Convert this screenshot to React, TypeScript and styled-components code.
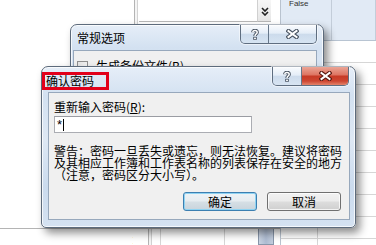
import styled, { createGlobalStyle } from "styled-components";

const GlobalStyle = createGlobalStyle`
  html, body {
    margin: 0;
    padding: 0;
    background: #fff;
    overflow: hidden;
  }
  body {
    font-family: "Noto Sans CJK SC", "Noto Sans", sans-serif;
    font-size: 12px;
    color: #000;
  }
`;

const Desktop = styled.div`
  position: relative;
  width: 376px;
  height: 245px;
  overflow: hidden;
  background: #fff;
`;

/* ---------- the spreadsheet window behind the dialogs ---------- */

const AppBack = styled.div`
  display: flex;
  width: 100%;
  height: 100%;
`;

const LeftColumn = styled.div`
  width: 281px;
  display: flex;
  flex-direction: column;
`;

const RightColumn = styled.div`
  flex: 1;
  display: flex;
  flex-direction: column;
  border-left: 1px solid #b9c3cf;
`;

const TopRow = styled.div`
  height: 24px;
  display: flex;
`;

const Blank = styled.div<{ $w: number }>`
  width: ${(p) => p.$w}px;
  background: #fff;
`;

const DoubleLine = styled.div`
  width: 2px;
  border-left: 1px solid #b4b4b4;
  border-right: 1px solid #d2d2d2;
  margin: 0 1px;
  background: #f4f4f4;
`;

const Combo = styled.div`
  flex: 1;
  border-bottom: 1px solid #b7b7b7;
  margin-bottom: 2px;
  background: #fff;
`;

const DropButton = styled.div`
  width: 14px;
  margin-bottom: 2px;
  border-left: 1px solid #d0d0d0;
  border-bottom: 1px solid #b7b7b7;
  background: linear-gradient(#f7f7f7, #e6e6e6);
  display: flex;
  align-items: flex-end;
  justify-content: center;
  padding-bottom: 5px;
  box-sizing: border-box;
`;

const Body = styled.div`
  flex: 1;
  background: #fff;
`;

const BottomRow = styled.div`
  height: 16px;
  display: flex;
  border-top: 1px solid #b4b4b4;
`;

const BottomLeft = styled.div`
  width: 133px;
  display: flex;
  justify-content: flex-end;
  align-items: flex-end;
`;

const Beam = styled.span`
  font-family: "Liberation Serif", serif;
  font-weight: bold;
  font-size: 11px;
  line-height: 9px;
  margin-right: -4px;
`;

const SheetStrip = styled.div`
  flex: 1;
  display: flex;
  background-color: #fff;
  background-image: linear-gradient(to right, #d6d6d6 1px, transparent 1px);
  background-size: 64px 100%;
  background-position: 71px 0;
  padding-left: 105px;
`;

const Thumb = styled.div`
  width: 14px;
  border: 1px solid #8896aa;
  border-top: none;
  background: linear-gradient(to right, #c9d3e2, #aebcd2 50%, #c3cede);
`;

const PropPanel = styled.div`
  height: 40px;
  display: flex;
  background: #e1eaf5;
  border-bottom: 1px solid #b8c4d2;
`;

const PropCell = styled.div<{ $w: number }>`
  width: ${(p) => p.$w}px;
  border-right: 1px solid #c3cdd9;
  overflow: hidden;
  font-family: "Liberation Sans", sans-serif;
  font-size: 8px;
  color: #333;
  line-height: 8px;
  padding-left: 8px;
  box-sizing: border-box;
`;

const Sheet = styled.div`
  flex: 1;
  background-color: #fff;
  background-image: linear-gradient(#d6d6d6 1px, transparent 1px),
    linear-gradient(to right, #d6d6d6 1px, transparent 1px);
  background-size: 100% 22px, 64px 100%;
  background-position: 0 21px, 36px 0;
`;

/* ---------- Aero dialogs ---------- */

const Dialog = styled.div<{ $x: number; $y: number; $w: number; $h: number }>`
  position: absolute;
  left: ${(p) => p.$x}px;
  top: ${(p) => p.$y}px;
  width: ${(p) => p.$w}px;
  height: ${(p) => p.$h}px;
  box-sizing: border-box;
  display: flex;
  flex-direction: column;
  border: 1px solid #5d6b7c;
  border-radius: 7px 7px 5px 5px;
  background: linear-gradient(
    to bottom,
    #e6eef8 0%,
    #d3e1f1 18%,
    #dee8f4 45%,
    #cbdbee 75%,
    #d5e2f1 100%
  );
  box-shadow: inset 0 0 0 1px rgba(255, 255, 255, 0.75),
    4px 5px 9px rgba(0, 0, 0, 0.45);
`;

const TitleBar = styled.div<{ $left: number; $right: number }>`
  height: 25px;
  display: flex;
  justify-content: space-between;
  align-items: flex-start;
  padding: 0 ${(p) => p.$right}px 0 ${(p) => p.$left}px;
`;

const Title = styled.div`
  line-height: 25px;
  font-size: 12px;
  color: #000;
`;

const MarkedTitle = styled.div`
  margin-top: 5px;
  height: 18px;
  box-sizing: border-box;
  border: 3px solid #e2001a;
  padding: 0 12px 0 1px;
  line-height: 12px;
  font-size: 12px;
`;

const CaptionGroup = styled.div`
  display: flex;
  height: 18px;
  border: 1px solid #5f6e80;
  border-top: none;
  border-radius: 0 0 5px 5px;
  overflow: hidden;
  box-shadow: 0 0 0 1px rgba(255, 255, 255, 0.5);
`;

const CaptionButton = styled.div<{ $w: number; $red?: boolean }>`
  width: ${(p) => p.$w}px;
  display: flex;
  align-items: center;
  justify-content: center;
  & + & {
    border-left: 1px solid #66778a;
  }
  background: ${(p) =>
    p.$red
      ? "linear-gradient(#eba595 0%, #de7664 42%, #c73a26 52%, #cd4631 78%, #e3836a 100%)"
      : "linear-gradient(rgba(255,255,255,0.75) 0%, rgba(232,240,249,0.6) 45%, rgba(190,208,228,0.55) 52%, rgba(214,228,242,0.6) 100%)"};
`;

const Client = styled.div<{ $m: string }>`
  flex: 1;
  margin: ${(p) => p.$m};
  background: #f0f0f0;
  border: 1px solid #97a8bc;
  display: flex;
  flex-direction: column;
`;

const CheckRow = styled.div`
  display: flex;
  align-items: center;
  gap: 8px;
  padding: 9px 0 0 3px;
  font-size: 12px;
  line-height: 12px;
`;

const CheckBox = styled.div`
  width: 11px;
  height: 11px;
  box-sizing: border-box;
  border: 1px solid #8f8f8f;
  background: linear-gradient(135deg, #e4e4e4, #fbfbfb);
`;

const ClientBody = styled.div`
  flex: 1;
  display: flex;
  flex-direction: column;
  padding: 8px 8px 7px 5px;
`;

const Label = styled.div`
  line-height: 12px;
  font-size: 12px;
  u {
    text-decoration: underline;
  }
`;

const PasswordField = styled.div`
  margin-top: 3px;
  width: 198px;
  height: 17px;
  box-sizing: border-box;
  border: 1px solid #abadb3;
  border-top-color: #9a9ca3;
  background: #fff;
  display: flex;
  align-items: center;
  padding-left: 2px;
  font-family: "Liberation Sans", sans-serif;
  font-size: 13px;
  line-height: 13px;
`;

const Caret = styled.span`
  width: 1px;
  height: 12px;
  background: #000;
  margin-left: 1px;
`;

const Warning = styled.p`
  margin: 12px 0 0;
  line-height: 12px;
  font-size: 12px;
  white-space: nowrap;
`;

const ButtonRow = styled.div`
  margin-top: 11px;
  display: flex;
  justify-content: flex-end;
  gap: 10px;
`;

const PushButton = styled.div<{ $default?: boolean }>`
  width: 74px;
  height: 19px;
  box-sizing: border-box;
  border: 1px solid ${(p) => (p.$default ? "#3c7fb1" : "#707070")};
  border-radius: 3px;
  background: ${(p) =>
    p.$default
      ? "linear-gradient(#eef3f6 0%, #e6ecf0 48%, #d6dfe5 52%, #c9d4dc 100%)"
      : "linear-gradient(#f2f2f2 0%, #ebebeb 48%, #dddddd 52%, #cfcfcf 100%)"};
  box-shadow: inset 0 0 0 1px
    ${(p) => (p.$default ? "#8fd3f2" : "rgba(255, 255, 255, 0.75)")};
  display: flex;
  align-items: center;
  justify-content: center;
  font-size: 12px;
  line-height: 12px;
`;

const HelpGlyph = () => (
  <svg width="8" height="11" viewBox="0 0 8 11">
    <path
      d="M1.8 3.2 C1.8 0.8 6.2 0.8 6.2 3.2 C6.2 5 4 5 4 7"
      fill="none"
      stroke="#4a5563"
      strokeWidth="3.4"
    />
    <rect x="2.2" y="7.8" width="3.6" height="3" fill="#4a5563" />
    <path
      d="M1.8 3.2 C1.8 0.8 6.2 0.8 6.2 3.2 C6.2 5 4 5 4 7"
      fill="none"
      stroke="#fff"
      strokeWidth="1.5"
    />
    <rect x="3.1" y="8.6" width="1.8" height="1.5" fill="#fff" />
  </svg>
);

const CloseGlyph = ({ dark }: { dark: string }) => (
  <svg width="13" height="10" viewBox="0 0 13 10">
    <path
      d="M2.5 2 L10.5 8 M10.5 2 L2.5 8"
      stroke={dark}
      strokeWidth="4.2"
      strokeLinecap="square"
    />
    <path
      d="M2.5 2 L10.5 8 M10.5 2 L2.5 8"
      stroke="#fff"
      strokeWidth="2"
      strokeLinecap="square"
    />
  </svg>
);

const Chevrons = () => (
  <svg width="8" height="9" viewBox="0 0 8 9">
    <path
      d="M1 1 L4 4 L7 1 M1 5 L4 8 L7 5"
      fill="none"
      stroke="#222"
      strokeWidth="1.6"
    />
  </svg>
);

function App() {
  return (
    <>
      <GlobalStyle />
      <Desktop>
        <AppBack>
          <LeftColumn>
            <TopRow>
              <Blank $w={133} />
              <DoubleLine />
              <Combo />
              <DropButton>
                <Chevrons />
              </DropButton>
              <Blank $w={9} />
            </TopRow>
            <Body />
            <BottomRow>
              <BottomLeft>
                <Beam>I</Beam>
              </BottomLeft>
              <Blank $w={14} />
              <DoubleLine />
              <SheetStrip>
                <Thumb />
              </SheetStrip>
            </BottomRow>
          </LeftColumn>
          <RightColumn>
            <PropPanel>
              <PropCell $w={51}>False</PropCell>
              <PropCell $w={44} />
            </PropPanel>
            <Sheet />
          </RightColumn>
        </AppBack>

        <Dialog $x={70} $y={24} $w={254} $h={130}>
          <TitleBar $left={6} $right={6}>
            <Title>常规选项</Title>
            <CaptionGroup>
              <CaptionButton $w={27}>
                <HelpGlyph />
              </CaptionButton>
              <CaptionButton $w={47}>
                <CloseGlyph dark="#4a5563" />
              </CaptionButton>
            </CaptionGroup>
          </TitleBar>
          <Client $m="0 6px 7px 2px">
            <CheckRow>
              <CheckBox />
              生成备份文件(B)
            </CheckRow>
          </Client>
        </Dialog>

        <Dialog $x={41} $y={66} $w={315} $h={162}>
          <TitleBar $left={0} $right={6}>
            <MarkedTitle>确认密码</MarkedTitle>
            <CaptionGroup>
              <CaptionButton $w={28}>
                <HelpGlyph />
              </CaptionButton>
              <CaptionButton $w={46} $red>
                <CloseGlyph dark="#5b1a12" />
              </CaptionButton>
            </CaptionGroup>
          </TitleBar>
          <Client $m="0 5px 7px 6px">
            <ClientBody>
              <Label>
                重新输入密码(<u>R</u>):
              </Label>
              <PasswordField>
                *<Caret />
              </PasswordField>
              <Warning>
                警告：密码一旦丢失或遗忘，则无法恢复。建议将密码
                <br />
                及其相应工作簿和工作表名称的列表保存在安全的地方
                <br />
                （注意，密码区分大小写）。
              </Warning>
              <ButtonRow>
                <PushButton $default>确定</PushButton>
                <PushButton>取消</PushButton>
              </ButtonRow>
            </ClientBody>
          </Client>
        </Dialog>
      </Desktop>
    </>
  );
}

export default App;
